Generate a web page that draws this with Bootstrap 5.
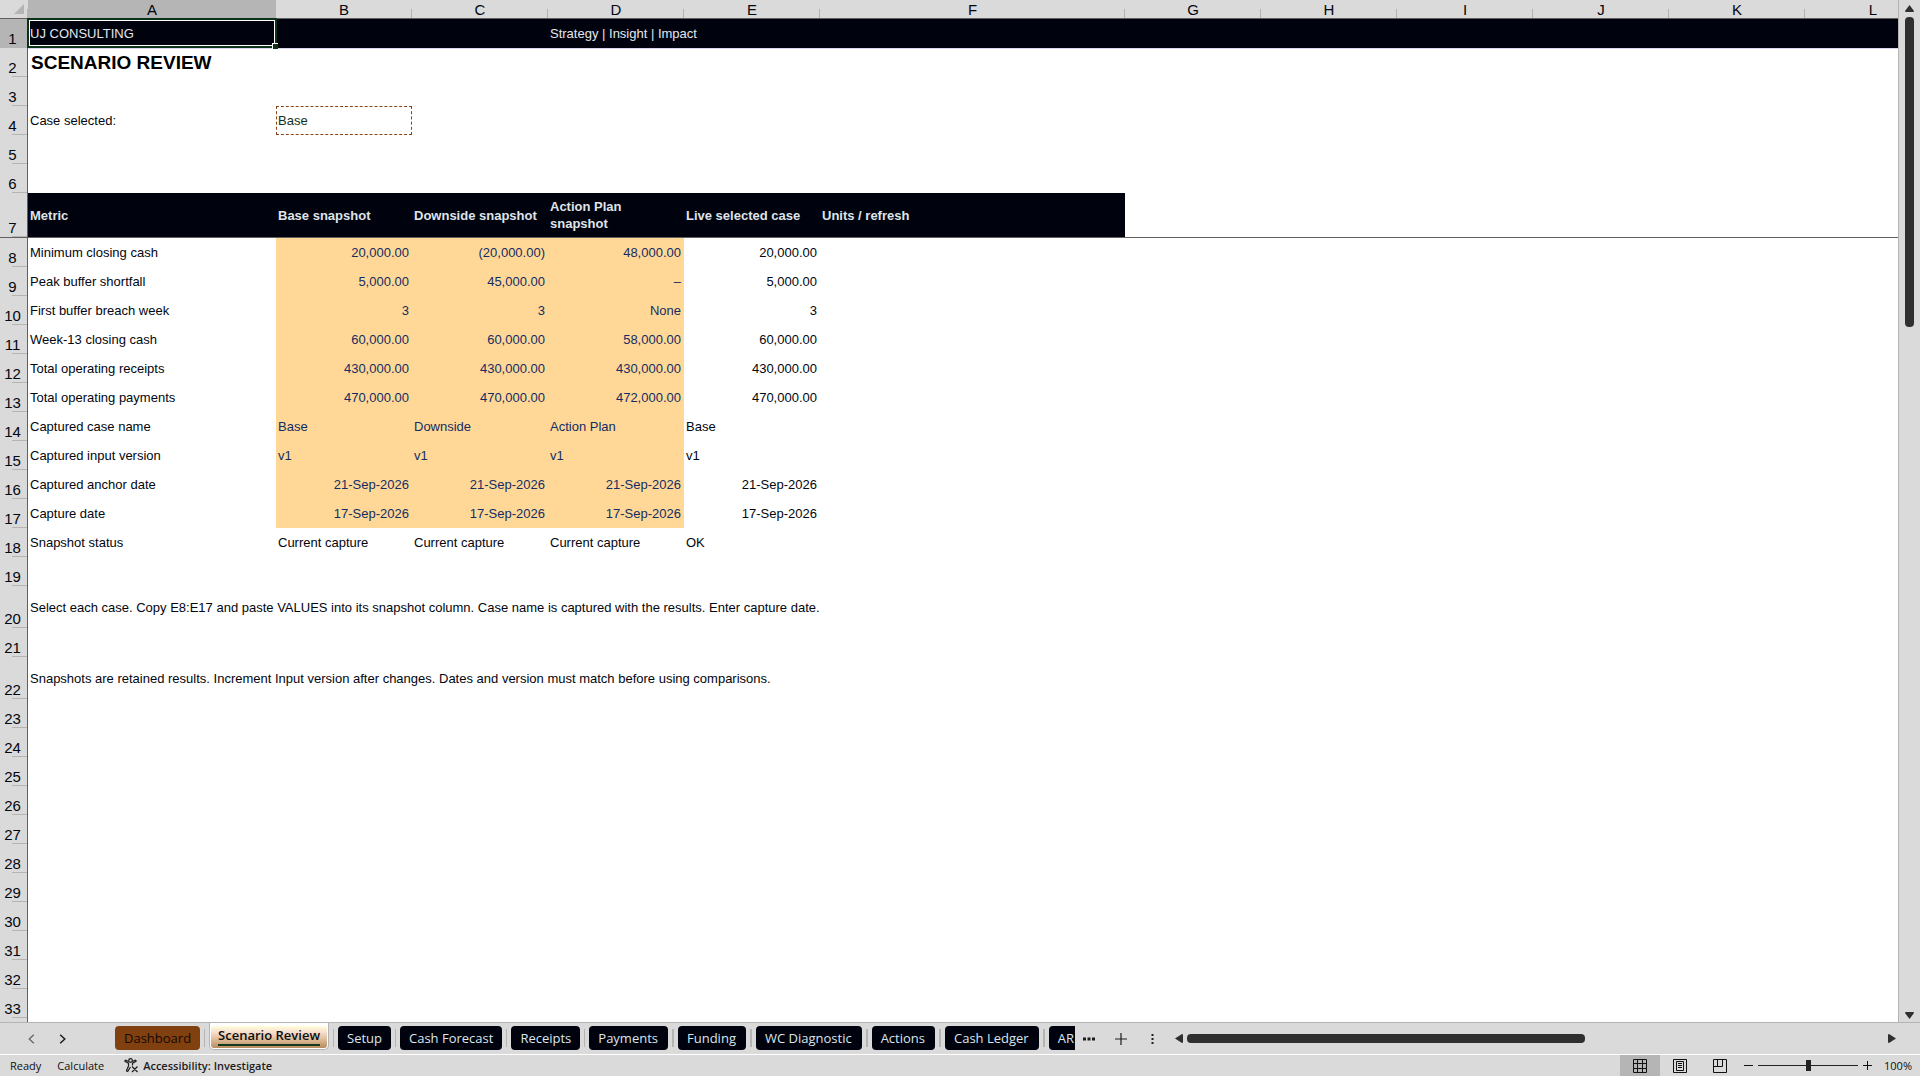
<!DOCTYPE html>
<html lang="en">
<head>
<meta charset="utf-8">
<meta name="viewport" content="width=device-width, initial-scale=1">
<title>Scenario Review</title>
<link href="https://cdn.jsdelivr.net/npm/bootstrap@5.3.0/dist/css/bootstrap.min.css" rel="stylesheet">
<style>
  :root { --chrome:#dadada; --rule:#b4b4b4; --edge:#606060; --navy:#00020e; --bar:#2f2f2f; --peach:#ffd898; --pick:#0b3317; }
  body { font-family:"Liberation Sans",Arial,sans-serif; font-size:13px; line-height:17px; color:#02060f; background:var(--chrome); }
  .pane { border-right:1px solid var(--rule); min-width:0; }
  .sheet { width:1941px; table-layout:fixed; border-collapse:separate; border-spacing:0; background:#fff; }
  .sheet td, .sheet th { height:29px; padding:0 3px 0 2px; vertical-align:middle; font-weight:400; white-space:nowrap; }
  .sheet thead th { height:19px; padding:0; font-size:15px; text-align:center; border-bottom:1px solid var(--edge);
    background:linear-gradient(var(--rule),var(--rule)) right bottom/1px 9px no-repeat var(--chrome); }
  .sheet tbody th.num { padding:0 2px 1px 0; font-size:15px; text-align:center; vertical-align:bottom; border-right:1px solid var(--edge);
    background:linear-gradient(var(--rule),var(--rule)) right bottom/15px 1px no-repeat var(--chrome); }
  .sheet thead th.sel, .sheet tbody th.sel { background-color:#b5b5b5; }
  .sheet .brand td { background:var(--navy); color:#e4e8ee; }
  .sheet .under td { box-shadow:inset 0 1px #dcd6f5; font-size:19px; font-weight:700; color:#000; padding-left:3px; }
  .sheet .caps > * { height:45px; border-bottom:1px solid var(--edge); }
  .sheet .caps .cap { background:var(--navy); color:#dfe4ea; font-weight:700; white-space:normal; }
  .sheet .tall td { height:42px; }
  .sheet td.snap { background:var(--peach); color:#142c62; }
  .sheet td.snapv { text-align:right; }
  .cursor { position:absolute; inset:-1px -1px 0 -1px; border:2px solid var(--pick); box-shadow:inset 0 0 0 1px #fff; }
  .cursor::after { content:""; position:absolute; right:-3px; bottom:-3px; width:6px; height:6px; background:var(--pick); border:solid #fff; border-width:1px 0 0 1px; }
  .case-pick { appearance:none; width:100%; height:29px; padding:0 1px; border:1px dashed #8a4413; border-radius:0; background:#fff; color:#123322; }
  .vbar { width:21px; padding:5px 0 3px; }
  .vthumb { width:9px; height:310px; border-radius:4px; background:var(--bar); margin-top:5px; }
  .bare { border:0; padding:0; background:none; line-height:0; color:#1d1d1d; }
  .tabs { height:33px; border-top:1px solid var(--rule); border-bottom:1px solid #fff; font:13px/24px "Open Sans","Noto Sans",sans-serif; }
  .tabs nav { padding-left:49px; width:1009px; overflow:hidden; }
  .leaf { display:block; height:24px; margin-top:3px; padding:0 9px; border-radius:4px; background:var(--navy); color:#dbe6ec; text-decoration:none; white-space:nowrap; }
  .leaf.home { background:#80400f; color:#160a02; }
  .split { flex:none; width:1px; height:18px; margin:6px 4px 0; background:var(--rule); }
  .far .leaf { padding:0 10px 0 9px; }
  .far .leaf:last-child { padding-right:0; border-radius:4px 0 0 4px; }
  .far .split { width:2px; }
  .now { height:28px; margin-top:-1px; padding:4px 1px 1px; background:#fff; border:solid var(--rule); border-width:0 1px 1px; border-radius:0 0 5px 5px; }
  .now a { display:block; height:22px; padding:0 7px; border-radius:3px; line-height:18px; font-weight:600; color:#0b0d10; text-decoration:none; white-space:nowrap;
    background:linear-gradient(#ffffdc,#f6dccb 30%,#dfbe98 60%,#b98b5e); }
  .now span { display:block; height:20px; border-bottom:2px solid #113a1e; }
  .hthumb { width:398px; height:9px; border-radius:4px; background:var(--bar); }
  .status { height:21px; padding-left:10px; font:11px/21px "Open Sans","Noto Sans",sans-serif; color:#101010; }
  .status strong { font-weight:600; }
  .view { width:40px; height:21px; }
  .view.on { background:#b5b5b5; }
  .zoomer { appearance:none; width:100px; height:11px; margin:0 5px; background:linear-gradient(#222,#222) center/100% 1px no-repeat; }
  .zoomer::-webkit-slider-thumb { appearance:none; width:5px; height:11px; background:#222; }
</style>
</head>
<body class="vh-100 d-flex flex-column overflow-hidden">
<main class="d-flex flex-grow-1 overflow-hidden">
  <div class="pane flex-grow-1 overflow-hidden bg-white">
    <table class="sheet">
      <colgroup><col style="width:28px"><col style="width:248px"><col style="width:136px"><col style="width:136px"><col style="width:136px"><col style="width:136px"><col style="width:305px"><col style="width:136px"><col style="width:136px"><col style="width:136px"><col style="width:136px"><col style="width:136px"><col style="width:136px"></colgroup>
      <thead><tr>
        <th aria-label="Select all"><svg class="d-block ms-auto me-1" width="10" height="10"><path d="M10 0V10H0Z" fill="#b4b4b4"/></svg></th>
        <th class="sel">A</th><th>B</th><th>C</th><th>D</th><th>E</th><th>F</th><th>G</th><th>H</th><th>I</th><th>J</th><th>K</th><th>L</th>
      </tr></thead>
      <tbody>
        <tr class="brand"><th class="num sel">1</th><td class="position-relative">UJ CONSULTING<div class="cursor"></div></td><td colspan="2"></td><td colspan="9">Strategy | Insight | Impact</td></tr>
        <tr class="under"><th class="num">2</th><td colspan="12">SCENARIO REVIEW</td></tr>
        <tr><th class="num">3</th><td colspan="12"></td></tr>
        <tr><th class="num">4</th><td><label for="case">Case selected:</label></td><td class="p-0"><select id="case" class="case-pick d-block"><option>Base</option><option>Downside</option><option>Action Plan</option></select></td><td colspan="10"></td></tr>
        <tr><th class="num">5</th><td colspan="12"></td></tr>
        <tr><th class="num">6</th><td colspan="12"></td></tr>
        <tr class="caps"><th class="num">7</th><th class="cap">Metric</th><th class="cap">Base snapshot</th><th class="cap">Downside snapshot</th><th class="cap">Action Plan snapshot</th><th class="cap">Live selected case</th><th class="cap">Units / refresh</th><td colspan="6"></td></tr>
        <tr><th class="num">8</th><td>Minimum closing cash</td><td class="snap snapv">20,000.00</td><td class="snap snapv">(20,000.00)</td><td class="snap snapv">48,000.00</td><td class="snapv">20,000.00</td><td colspan="7"></td></tr>
        <tr><th class="num">9</th><td>Peak buffer shortfall</td><td class="snap snapv">5,000.00</td><td class="snap snapv">45,000.00</td><td class="snap snapv">–</td><td class="snapv">5,000.00</td><td colspan="7"></td></tr>
        <tr><th class="num">10</th><td>First buffer breach week</td><td class="snap snapv">3</td><td class="snap snapv">3</td><td class="snap snapv">None</td><td class="snapv">3</td><td colspan="7"></td></tr>
        <tr><th class="num">11</th><td>Week-13 closing cash</td><td class="snap snapv">60,000.00</td><td class="snap snapv">60,000.00</td><td class="snap snapv">58,000.00</td><td class="snapv">60,000.00</td><td colspan="7"></td></tr>
        <tr><th class="num">12</th><td>Total operating receipts</td><td class="snap snapv">430,000.00</td><td class="snap snapv">430,000.00</td><td class="snap snapv">430,000.00</td><td class="snapv">430,000.00</td><td colspan="7"></td></tr>
        <tr><th class="num">13</th><td>Total operating payments</td><td class="snap snapv">470,000.00</td><td class="snap snapv">470,000.00</td><td class="snap snapv">472,000.00</td><td class="snapv">470,000.00</td><td colspan="7"></td></tr>
        <tr><th class="num">14</th><td>Captured case name</td><td class="snap">Base</td><td class="snap">Downside</td><td class="snap">Action Plan</td><td>Base</td><td colspan="7"></td></tr>
        <tr><th class="num">15</th><td>Captured input version</td><td class="snap">v1</td><td class="snap">v1</td><td class="snap">v1</td><td>v1</td><td colspan="7"></td></tr>
        <tr><th class="num">16</th><td>Captured anchor date</td><td class="snap snapv">21-Sep-2026</td><td class="snap snapv">21-Sep-2026</td><td class="snap snapv">21-Sep-2026</td><td class="snapv">21-Sep-2026</td><td colspan="7"></td></tr>
        <tr><th class="num">17</th><td>Capture date</td><td class="snap snapv">17-Sep-2026</td><td class="snap snapv">17-Sep-2026</td><td class="snap snapv">17-Sep-2026</td><td class="snapv">17-Sep-2026</td><td colspan="7"></td></tr>
        <tr><th class="num">18</th><td>Snapshot status</td><td>Current capture</td><td>Current capture</td><td>Current capture</td><td>OK</td><td colspan="7"></td></tr>
        <tr><th class="num">19</th><td colspan="12"></td></tr>
        <tr class="tall"><th class="num">20</th><td colspan="12">Select each case. Copy E8:E17 and paste VALUES into its snapshot column. Case name is captured with the results. Enter capture date.</td></tr>
        <tr><th class="num">21</th><td colspan="12"></td></tr>
        <tr class="tall"><th class="num">22</th><td colspan="12">Snapshots are retained results. Increment Input version after changes. Dates and version must match before using comparisons.</td></tr>
        <tr><th class="num">23</th><td colspan="12"></td></tr>
        <tr><th class="num">24</th><td colspan="12"></td></tr>
        <tr><th class="num">25</th><td colspan="12"></td></tr>
        <tr><th class="num">26</th><td colspan="12"></td></tr>
        <tr><th class="num">27</th><td colspan="12"></td></tr>
        <tr><th class="num">28</th><td colspan="12"></td></tr>
        <tr><th class="num">29</th><td colspan="12"></td></tr>
        <tr><th class="num">30</th><td colspan="12"></td></tr>
        <tr><th class="num">31</th><td colspan="12"></td></tr>
        <tr><th class="num">32</th><td colspan="12"></td></tr>
        <tr><th class="num">33</th><td colspan="12"></td></tr>
        <tr><th class="num"></th><td colspan="12"></td></tr>
      </tbody>
    </table>
  </div>
  <div class="vbar d-flex flex-column align-items-center flex-shrink-0">
    <button class="bare" aria-label="Scroll up"><svg width="9" height="7"><path d="M4.5 0 9 6Q9 7 8 7H1Q0 7 0 6Z" fill="#2f2f2f"/></svg></button>
    <div class="vthumb"></div>
    <button class="bare mt-auto" aria-label="Scroll down"><svg width="9" height="7"><path d="M4.5 7 9 1Q9 0 8 0H1Q0 0 0 1Z" fill="#2f2f2f"/></svg></button>
  </div>
</main>
<div class="tabs d-flex flex-shrink-0">
  <div class="d-flex align-items-center flex-shrink-0 ps-4">
    <button class="bare ms-1" aria-label="Previous sheet"><svg width="7" height="10" fill="none" stroke="#666" stroke-width="1.3"><path d="M5.8 .7 1.2 5 5.8 9.3"/></svg></button>
    <button class="bare ms-4" aria-label="Next sheet"><svg width="7" height="10" fill="none" stroke="#1d1d1d" stroke-width="1.5"><path d="M1.2 .7 5.8 5 1.2 9.3"/></svg></button>
  </div>
  <nav class="d-flex flex-shrink-0" aria-label="Sheets">
    <a class="leaf home" href="#">Dashboard</a><i class="split"></i>
    <div class="now"><a href="#" aria-current="page"><span>Scenario Review</span></a></div><i class="split"></i>
    <a class="leaf" href="#">Setup</a><i class="split"></i>
    <a class="leaf" href="#">Cash Forecast</a><i class="split"></i>
    <a class="leaf" href="#">Receipts</a><i class="split"></i>
    <div class="far d-flex flex-grow-1">
      <a class="leaf" href="#">Payments</a><i class="split"></i>
      <a class="leaf" href="#">Funding</a><i class="split"></i>
      <a class="leaf" href="#">WC Diagnostic</a><i class="split"></i>
      <a class="leaf" href="#">Actions</a><i class="split"></i>
      <a class="leaf" href="#">Cash Ledger</a><i class="split"></i>
      <a class="leaf flex-grow-1" href="#">AR</a>
    </div>
  </nav>
  <div class="d-flex align-items-center flex-grow-1">
    <button class="bare ms-2" aria-label="More sheets"><svg width="12" height="4"><path d="M0 .5h3v3H0zM4.500 .5h3v3h-3zM9 .5h3v3H9z" fill="#1d1d1d"/></svg></button>
    <button class="bare ms-3 ps-1" aria-label="New sheet"><svg width="12" height="12"><path d="M6 0V12M0 6H12" stroke="#1d1d1d" stroke-width="1.2"/></svg></button>
    <span class="ms-4 lh-1"><svg class="d-block" width="4" height="12"><path d="M.5 1h2v2h-2zM.5 5h2v2h-2zM.5 9h2v2h-2z" fill="#1d1d1d"/></svg></span>
    <button class="bare ms-3 ps-1" aria-label="Scroll left"><svg width="8" height="9"><path d="M0 4.500 7 0Q8 0 8 1V8Q8 9 7 9Z" fill="#2f2f2f"/></svg></button>
    <div class="hthumb ms-1"></div>
    <button class="bare ms-auto me-4" aria-label="Scroll right"><svg width="8" height="9"><path d="M8 4.500 1 0Q0 0 0 1V8Q0 9 1 9Z" fill="#2f2f2f"/></svg></button>
  </div>
</div>
<footer class="status d-flex align-items-center flex-shrink-0">
  <span>Ready</span>
  <span class="ms-3">Calculate</span>
  <button class="bare d-flex align-items-center ms-3 ps-1" aria-label="Accessibility: Investigate">
    <svg width="15" height="15" fill="none" stroke="#1d1d1d" stroke-width="1.2"><circle cx="6.500" cy="2.500" r="1.800"/><path d="M4.800 3.500 1.500 2.200Q.5 2.800 1.200 3.600L4.500 5.200V8L2.500 12.500Q2.800 13.800 3.800 13.200L6.500 9M8.200 3.500 11.500 2.200Q12.600 2.800 11.800 3.600L8.500 5.200V7.500M8 8.500 13.500 14M13.500 8.500 8 14"/></svg>
    <strong class="ms-1">Accessibility: Investigate</strong>
  </button>
  <div class="d-flex align-items-center ms-auto">
    <button class="bare view on" aria-label="Normal view"><svg width="14" height="14" fill="none" stroke="#111" stroke-width="1"><path d="M.5 .5h13v13H.5zM.5 4.500h13M.5 9.500h13M4.500 .5v13M9.500 .5v13"/></svg></button>
    <button class="bare view" aria-label="Page layout"><svg width="14" height="14" fill="none" stroke="#111" stroke-width="1"><path d="M.5 .5h13v13H.5zM3.500 2.500h7v9h-7zM5 4.500h4M5 6.500h4M5 8.500h4"/></svg></button>
    <button class="bare view" aria-label="Page break preview"><svg width="14" height="14" fill="none" stroke="#111" stroke-width="1"><path d="M.5 .5h13v13H.5zM4.500 .5v7M9.500 .5v7M.5 7.500h9"/></svg></button>
    <button class="bare ms-1" aria-label="Zoom out"><svg width="9" height="9"><path d="M0 4.500H9" stroke="#111"/></svg></button>
    <input class="zoomer" type="range" min="0" max="200" value="100" aria-label="Zoom">
    <button class="bare" aria-label="Zoom in"><svg width="9" height="9"><path d="M0 4.500H9M4.500 0V9" stroke="#111"/></svg></button>
    <span class="ms-2 ps-1 me-2">100%</span>
  </div>
</footer>
<script src="https://cdn.jsdelivr.net/npm/bootstrap@5.3.0/dist/js/bootstrap.bundle.min.js"></script>
</body>
</html>
